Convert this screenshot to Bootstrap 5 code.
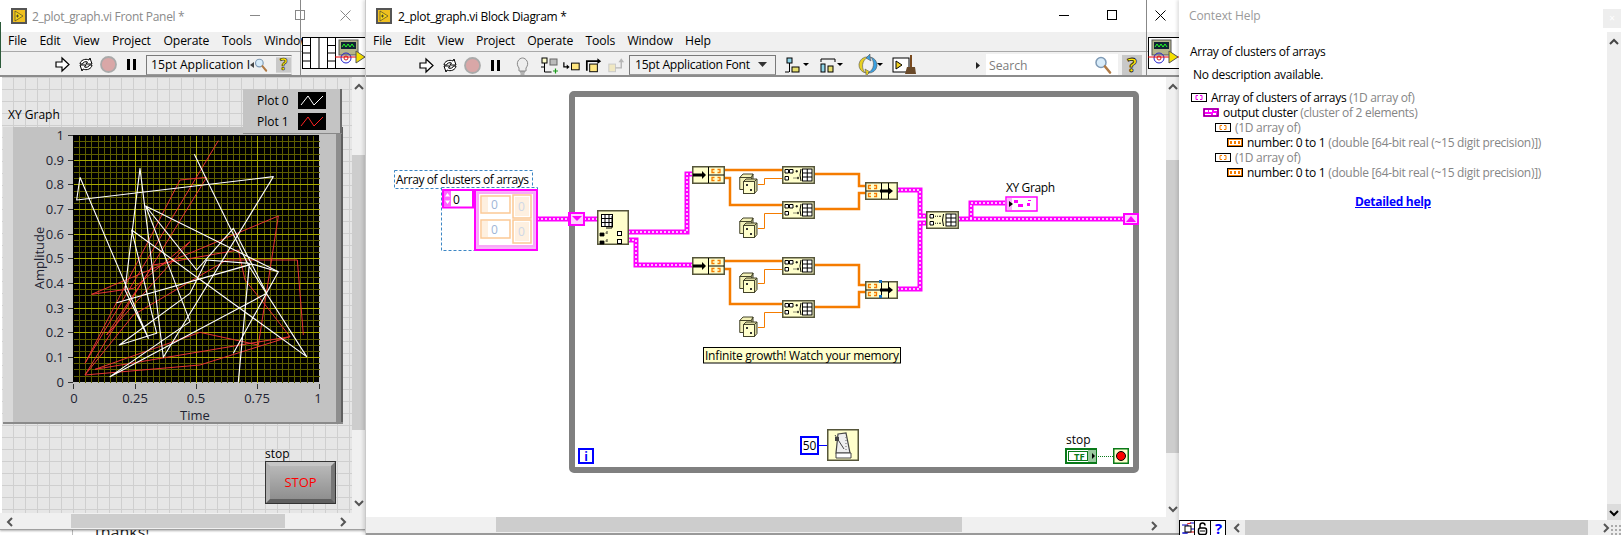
<!DOCTYPE html>
<html lang="en">
<head>
<meta charset="utf-8">
<title>2_plot_graph.vi</title>
<link href="https://cdn.jsdelivr.net/npm/bootstrap@5.3.0/dist/css/bootstrap.min.css" rel="stylesheet">
<style>
html,body{height:535px;overflow:hidden;background:#fff}
body{font-family:"Open Sans","Noto Sans",sans-serif;font-size:12px;letter-spacing:-.3px;color:#000;line-height:15px;position:relative}
.lv-win{position:absolute;top:0;background:#fff}
.win-fp{left:0;width:366px;height:530px;border-bottom:1px solid #a0a0a0;box-shadow:0 1px 2px rgba(0,0,0,.3)}
.win-bd{left:365px;width:815px;height:535px;border-left:1px solid #c9c9c9;box-shadow:-2px 0 3px rgba(0,0,0,.12)}
.win-help{left:1179px;width:442px;height:535px;box-shadow:-2px 0 3px rgba(0,0,0,.12)}
.behind-txt{position:absolute;left:95px;top:522px;font-size:16px;line-height:20px;color:#222;letter-spacing:0}
.behind-line{position:absolute;left:72px;top:530px;width:1px;height:5px;background:#bbb}
.edge-sliver{position:absolute;left:0;top:22px;width:1px;height:46px;background:#2c5a3a;z-index:5}
.tbar{height:32px;flex:none;font-size:12px}
.tbar-title{margin-left:5px}
.bd-tb .tbar-title{margin-left:6px}
.fp-title{color:#8a8a8a}
.vi-logo{width:16px;height:16px;flex:none}
.fp-tb{padding-left:11px}
.bd-tb{padding-left:10px}
.capbtns{position:absolute;top:9px;display:flex;gap:0}
.capbtn{width:45px;height:12px;display:flex;justify-content:center;align-items:center}
.capbtns-bd .capbtn{width:48px}
.menu-bar{height:20px;flex:none;background:#f0f0f0;border-bottom:1px solid #a9a9a9;font-size:12.2px;letter-spacing:-.12px;line-height:18px;overflow:hidden;white-space:nowrap}
.fp-menu{padding-left:8px;gap:12.6px}
.bd-menu{padding-left:7px;gap:12.3px}
.tool-bar{height:25px;flex:none;background:#f0f0f0;border-bottom:2px solid #8c8c8c;overflow:hidden;padding-top:3px}
.fp-tools{padding-top:2px}
.tic{width:23px;height:23px;flex:none;display:block}
.tic-s{width:22px}
.font-box{height:20px;border:1px solid #7a7a7a;border-right-color:#ddd;border-bottom-color:#9a9a9a;font-size:12.2px;letter-spacing:0;line-height:18px;white-space:nowrap;background:#f0f0f0;flex:none}
.font-fp{width:146px;margin-left:3px;padding-left:4px;position:relative}
.font-bd{width:147px;margin-left:2px;padding-left:5px;border-right-color:#7a7a7a;letter-spacing:-.3px}
.pane-pos{position:absolute;top:0;height:76px;border-left:1px solid #888;background:transparent}
.pane-box{position:absolute;top:37px;background:#fff;border:1px solid #000;border-radius:1px}
.canvas-fp{flex:1 1 auto;position:relative;background-color:#e6e6e6;background-image:linear-gradient(#cfcfcf 1px,transparent 1px),linear-gradient(90deg,#cfcfcf 1px,transparent 1px);background-size:12px 12px;background-position:11px 0;margin-left:2px;overflow:hidden}
.canvas-bd{flex:1 1 auto;position:relative;background:#fff;overflow:hidden}
.full-svg{position:absolute;left:0;top:0;display:block}
.vs{width:14px;flex:none;background:#f0f0f0;position:relative}
.vs-thumb{position:absolute;left:0;right:0;background:#cdcdcd}
.vs-up{position:absolute;left:2px;width:10px;height:7px}
.hs{height:16px;flex:none;background:#f0f0f0;position:relative}
.hs-thumb{position:absolute;top:1px;bottom:1px;background:#cdcdcd}
.hs-ch{position:absolute;top:4px;width:7px;height:10px}
.stop-lbl{position:absolute;left:263px;top:369px;font-size:12px;letter-spacing:0}
.stop-btn{position:absolute;left:263px;top:384px;width:71px;height:43px;border-radius:0;padding:0;color:#f00;font-size:13px;font-family:inherit;letter-spacing:0;line-height:31px;border-style:solid;border-width:5px;border-color:#c6c6c6 #777 #5f5f5f #b0b0b0;outline:1px solid #333;outline-offset:-1px;background:linear-gradient(#b8b8b8,#8f8f8f)}
.help-head{position:absolute;left:10px;top:8px;font-size:12px;color:#9a9a9a;letter-spacing:-.1px}
.help-x{position:absolute;right:0;top:9px;width:18px;height:19px;background:#eee;color:#fff;font-size:10px;text-align:center;line-height:18px}
.help-body{position:absolute;left:0;top:32px;right:14px;bottom:14px;overflow:hidden}
.help-name{position:absolute;left:11px;top:12px}
.help-desc{position:absolute;left:14px;top:35px}
.help-tree{position:absolute;left:12px;top:58px;white-space:nowrap}
.tree-row{height:15px;align-items:center;display:flex;gap:4px}
.lv1{padding-left:12px}.lv2{padding-left:24px}.lv3{padding-left:36px}
.muted-lv{color:#858585}
.type-ic{width:16px;height:9px;display:block;flex:none}
.help-link{position:absolute;left:176px;top:162px;font-weight:700;color:#00f}
.vs-help{position:absolute;right:0;top:32px;bottom:14px;width:14px;background:#eee}
.vs-help-low{position:absolute;left:0;right:0;bottom:0;height:17px;background:#dcdcdc}
.hs-help{position:absolute;left:0;right:0;bottom:0;height:15px;background:#eee}
.help-btns{display:flex;height:15px;width:49px}
.help-btn{width:16.33px;height:15px;border:1px solid #000;border-bottom:0;margin-right:-1px;background:#fff;display:block;flex:none}
.grip{position:absolute;right:0;bottom:0;width:11px;height:11px;background-image:radial-gradient(#aaa 1px,transparent 1.2px);background-size:4px 4px}
text{font-family:"Open Sans","Noto Sans",sans-serif;letter-spacing:0}
.t12{font-size:12px;fill:#000}
.t-axis{font-size:13px;fill:#1f2433}
</style>
</head>
<body>
<svg width="0" height="0" class="position-absolute">
<defs>
<symbol id="s-logo" viewBox="0 0 16 16"><rect width="16" height="16" fill="#555"/><rect x="2" y="2" width="12" height="12" fill="#f0c020"/><path d="M4 3l8 5-8 5z" fill="#f7d417" stroke="#333" stroke-width=".6"/><path d="M5 8h3M6.500 6.500v3" stroke="#333" stroke-width=".8"/></symbol>
<symbol id="s-run" viewBox="0 0 23 23"><path d="M5 9h6V5l7 6.500-7 6.500v-4H5z" fill="#fff" stroke="#000" stroke-width="1.200"/></symbol>
<symbol id="s-cont" viewBox="0 0 23 23"><path d="M6 11a6 5 0 0 1 9-4l1-2 2 6-6 0 1.500-2a3.500 3 0 0 0-5 2z" fill="#fff" stroke="#000"/><path d="M18 12a6 5 0 0 1-9 4l-1 2-2-6 6 0-1.500 2a3.500 3 0 0 0 5-2z" fill="#fff" stroke="#000"/></symbol>
<symbol id="s-abort" viewBox="0 0 23 23"><circle cx="11.500" cy="11.500" r="7.500" fill="#d9a7a7" stroke="#aaa" stroke-width="1.800"/></symbol>
<symbol id="s-pause" viewBox="0 0 23 23"><path d="M7 6h3v11H7zM13 6h3v11h-3z" fill="#000"/></symbol>
<symbol id="s-bulb" viewBox="0 0 23 23"><path d="M8 14c-4-5 0-10 3.500-10s7.500 5 3.500 10v3H8z" fill="#eee" stroke="#888"/><path d="M9 18h5M9.500 20h4" stroke="#777" stroke-width="1.200"/></symbol>
<symbol id="s-retain" viewBox="0 0 23 23"><rect x="4" y="4" width="5" height="5" fill="#ffc" stroke="#000"/><rect x="12" y="5" width="7" height="6" fill="#bbb" stroke="#666"/><path d="M6.500 9v9h7" fill="none" stroke="#000"/><path d="M15 17h5M17.500 14.500v5" stroke="#1a9a1a" stroke-width="1.200"/><path d="M3 13h4" stroke="#000"/></symbol>
<symbol id="s-into" viewBox="0 0 23 23"><path d="M3 8v5h4" fill="none" stroke="#000" stroke-width="1.300"/><path d="M6 10.500l3 2.500-3 2.500z" fill="#000"/><rect x="11" y="9" width="8" height="7" fill="#ffe680" stroke="#000"/></symbol>
<symbol id="s-over" viewBox="0 0 23 23"><path d="M4 17V7h12" fill="none" stroke="#000" stroke-width="1.800"/><path d="M15 4l4 3-4 3z" fill="#000"/><rect x="7" y="10" width="8" height="8" fill="#ffe680" stroke="#000"/></symbol>
<symbol id="s-out" viewBox="0 0 23 23" opacity=".55"><rect x="4" y="10" width="7" height="8" fill="#f0e2a0" stroke="#aaa"/><path d="M11 14h6V7" fill="none" stroke="#888" stroke-width="1.500"/><path d="M14 8l3-4 3 4z" fill="#888"/></symbol>
<symbol id="s-align" viewBox="0 0 26 23"><rect x="3" y="4" width="5" height="5" fill="#8fd4e8" stroke="#000"/><rect x="8" y="13" width="7" height="5" fill="#e8e070" stroke="#000"/><path d="M1 18h4M5.500 9v9" stroke="#000"/><path d="M19 9h6l-3 3z" fill="#000"/></symbol>
<symbol id="s-dist" viewBox="0 0 26 23"><path d="M3 5h14M3 5v3M17 5v3" fill="none" stroke="#000"/><rect x="3" y="10" width="4" height="8" fill="#8fd4e8" stroke="#000"/><rect x="10" y="12" width="5" height="6" fill="#e8e070" stroke="#000"/><path d="M19 9h6l-3 3z" fill="#000"/></symbol>
<symbol id="s-reorder" viewBox="0 0 30 23"><path d="M12 3a8 8 0 0 0-2 16l-1-4 5 3-4 4 0-2.500A10 10 0 0 1 12 3z" fill="#e8d020" stroke="#555" stroke-width=".6"/><path d="M12 19a8 8 0 0 0 2-16l1 4-5-3 4-4 0 2.500A10 10 0 0 1 12 19z" fill="#3aa0e0" stroke="#555" stroke-width=".6"/><path d="M21 9h6l-3 3z" fill="#000"/></symbol>
<symbol id="s-clean" viewBox="0 0 24 23"><rect x="1" y="4" width="16" height="14" fill="#fff" stroke="#000"/><path d="M4 7l6 4-6 4z" fill="#f0d020" stroke="#000"/><path d="M19 1v12" stroke="#7a4a1f" stroke-width="2"/><path d="M15 13h8l1 7H13z" fill="#6a4a2a"/></symbol>
<symbol id="s-zoom" viewBox="0 0 18 20"><circle cx="7" cy="7.500" r="5" fill="#d8ecfa" stroke="#7f9ab5" stroke-width="1.500"/><path d="M11 11.500l5 6" stroke="#b07a45" stroke-width="2.600" stroke-linecap="round"/></symbol>
<symbol id="s-help" viewBox="0 0 20 20"><rect width="20" height="20" fill="#c8c8c8"/><text x="10" y="17" text-anchor="middle" font-size="20" font-weight="700" fill="#ffe800" stroke="#222" stroke-width=".8">?</text></symbol>
<symbol id="s-up" viewBox="0 0 10 7"><path d="M1 6l4-4 4 4" fill="none" stroke="#555" stroke-width="2"/></symbol>
<symbol id="s-down" viewBox="0 0 10 7"><path d="M1 1l4 4 4-4" fill="none" stroke="#555" stroke-width="2"/></symbol>
<symbol id="s-left" viewBox="0 0 7 10"><path d="M6 1L2 5l4 4" fill="none" stroke="#555" stroke-width="2"/></symbol>
<symbol id="s-right" viewBox="0 0 7 10"><path d="M1 1l4 4-4 4" fill="none" stroke="#555" stroke-width="2"/></symbol>
<symbol id="s-conn" viewBox="0 0 34 32"><rect x=".5" y=".5" width="33" height="31" fill="#fff" stroke="#000"/><path d="M8.500 1v30M25.500 1v30M17 1v30M1 8.500h7.500M1 16h7.500M1 24h7.500M25.500 8.500H33M25.500 16H33M25.500 24H33" stroke="#000" fill="none"/></symbol>
<symbol id="s-viicon" viewBox="0 0 32 32"><rect x=".5" y=".5" width="31" height="31" fill="#fff" stroke="#000"/><rect x="4" y="3" width="19" height="15" fill="#b5b58a" stroke="#555"/><rect x="6" y="5" width="15" height="7" fill="#123"/><path d="M7 10l2-3 2 3 2-3 2 3 2-3 2 3" fill="none" stroke="#2f2" stroke-width="1"/><circle cx="11" cy="21" r="5" fill="none" stroke="#22c"/><circle cx="11" cy="21" r="2" fill="none" stroke="#c22"/><path d="M0 20h32" stroke="#e00"/><path d="M21 14l9 6-9 6z" fill="#f5e000" stroke="#555"/></symbol>
<symbol id="s-build" viewBox="0 0 33 18"><rect x=".75" y=".75" width="31.500" height="16.500" fill="#ffc" stroke="#55553a" stroke-width="1.500"/><path d="M3 3.500h3.500v3.500H3zM7.500 3.500H11v3.500H7.500zM3 10.500h3.500V14H3z" fill="#fff" stroke="#000"/><path d="M11.500 12h1M13.500 12h1M13.500 5.250h2.500M14.750 4v2.500M15 12h2M16 10.800v2.400" stroke="#000" stroke-width=".9"/><path d="M19 3q-2 6 0 12" fill="none" stroke="#000"/><rect x="20.500" y="3" width="9.500" height="12" fill="#fff" stroke="#000"/><path d="M25.250 3v12M20.500 7h9.500M20.500 11h9.500" stroke="#000"/></symbol>
<symbol id="s-build2" viewBox="0 0 33 18"><rect x=".75" y=".75" width="31.500" height="16.500" fill="#ffc" stroke="#55553a" stroke-width="1.500"/><path d="M4 3.500h3.500v3.500H4zM4 10.500h3.500V14H4z" fill="#fff" stroke="#000"/><path d="M9 5.250h1M11 5.250h1M13 5.250h2M9 12.250h1M11 12.250h1M13 12.250h2" stroke="#000" stroke-width=".9"/><path d="M17.500 3q-2 6 0 12" fill="none" stroke="#000"/><rect x="20" y="3" width="10" height="12" fill="#fff" stroke="#000"/><path d="M25 3v12M20 7h10M20 11h10" stroke="#000"/></symbol>
<symbol id="s-split" viewBox="0 0 33 18"><rect x=".75" y=".75" width="31.500" height="16.500" fill="#ffc" stroke="#55553a" stroke-width="1.500"/><path d="M16.500 1v16M16.500 9H32" stroke="#000"/><path d="M1 7.500h9V5l4 4-4 4v-2.500H1z" fill="#000"/><path d="M22.500 3.500h-2.500v3h2.500M25.500 3.500h2.500v3h-2.500M22.500 11.500h-2.500v3h2.500M25.500 11.500h2.500v3h-2.500" fill="none" stroke="#f57c00" stroke-width="1.300"/></symbol>
<symbol id="s-bundle" viewBox="0 0 33 18"><rect x=".75" y=".75" width="31.500" height="16.500" fill="#ffc" stroke="#55553a" stroke-width="1.500"/><path d="M16.500 1v16M23.500 1v16M1 9h15.500" stroke="#000"/><path d="M15 7.500h8V5l5 4-5 4v-2.500h-8z" fill="#000"/><path d="M6 3.500H3.500v3H6M9 3.500h2.500v3H9M6 11.500H3.500v3H6M9 11.500h2.500v3H9" fill="none" stroke="#f57c00" stroke-width="1.300"/></symbol>
<symbol id="s-dice" viewBox="0 0 19 21"><path d="M.75 4.500L4 1h10l-1.500 3.500zM.75 4.500h11.750v12H.75z" fill="#f3f1b8" stroke="#44442a"/><path d="M12.500 4.500L14 1v7" fill="#cccc99" stroke="#44442a"/><rect x="4.500" y="8.500" width="11" height="12" fill="#ffc" stroke="#44442a"/><path d="M4.500 8.500L7 6h11l-2.500 2.500zM15.500 8.500L18 6v11.500l-2.500 3z" fill="#d8d6a0" stroke="#44442a"/><rect x="7" y="11" width="2" height="2" fill="#333"/><rect x="11" y="16" width="2" height="2" fill="#333"/></symbol>
</defs>
</svg>

<div class="behind-line"></div>
<div class="behind-txt">thanks!</div>

<section class="lv-win win-fp d-flex flex-column">
  <div class="tbar d-flex align-items-center fp-tb"><svg class="vi-logo"><use href="#s-logo"/></svg><span class="tbar-title fp-title">2_plot_graph.vi Front Panel *</span></div>
  <div class="capbtns" style="left:233px">
    <span class="capbtn"><svg width="11" height="11"><path d="M0 5.500h10" stroke="#888"/></svg></span>
    <span class="capbtn"><svg width="11" height="11"><rect x=".5" y=".5" width="9" height="9" fill="none" stroke="#888"/></svg></span>
    <span class="capbtn"><svg width="11" height="11"><path d="M.5.500l10 10M10.500.500l-10 10" stroke="#888"/></svg></span>
  </div>
  <nav class="menu-bar d-flex fp-menu"><span>File</span><span>Edit</span><span>View</span><span>Project</span><span>Operate</span><span>Tools</span><span>Window</span></nav>
  <div class="tool-bar fp-tools d-flex align-items-center" style="padding-left:51px">
    <svg class="tic"><use href="#s-run"/></svg><svg class="tic"><use href="#s-cont"/></svg><svg class="tic"><use href="#s-abort"/></svg><svg class="tic"><use href="#s-pause"/></svg>
    <div class="font-box font-fp d-flex align-items-center">15pt Application I<svg width="5" height="6" class="ms-auto me-0"><path d="M4 0v6L0 3z" fill="#444"/></svg><svg width="18" height="20"><use href="#s-zoom"/></svg><svg width="20" height="20" class="ms-2"><use href="#s-help"/></svg></div>
  </div>
  <div class="d-flex flex-grow-1" style="min-height:0">
    <div class="canvas-fp">
      <svg class="full-svg" width="350" height="435" viewBox="2 77 350 435">
        <rect x="3" y="127" width="340" height="297" fill="#c2c2c2"/>
        <rect x="3" y="127" width="10" height="297" fill="#d9d9d9"/>
        <rect x="336" y="127" width="7" height="297" fill="#8d8d8d"/>
        <rect x="341" y="127" width="2" height="297" fill="#5f5f5f"/>
        <rect x="3" y="422" width="340" height="2" fill="#8a8a8a"/>
        <text x="8" y="119" class="t12">XY Graph</text>
        <rect x="243" y="89" width="98" height="45" fill="#c4c4c4"/><rect x="340" y="89" width="2" height="45" fill="#6a6a6a"/><rect x="243" y="133" width="99" height="1" fill="#888"/>
        <text x="257" y="105" class="t12">Plot 0</text><text x="257" y="126" class="t12">Plot 1</text>
        <rect x="298" y="92" width="28" height="17" fill="#000"/><rect x="298" y="113" width="28" height="17" fill="#000"/>
        <path d="M301 105l7-9 6 9 9-9" fill="none" stroke="#fff"/><path d="M301 126l7-9 6 9 9-9" fill="none" stroke="#f22"/>
        <rect x="73" y="135" width="246" height="247" fill="#000"/>
        <g transform="translate(.5 .5)" shape-rendering="crispEdges">
          <path stroke="#5e5e00" fill="none" d="M79 135v247M85 135v247M91 135v247M98 135v247M104 135v247M110 135v247M116 135v247M122 135v247M128 135v247M141 135v247M147 135v247M153 135v247M159 135v247M165 135v247M171 135v247M178 135v247M184 135v247M190 135v247M202 135v247M208 135v247M214 135v247M221 135v247M227 135v247M233 135v247M239 135v247M245 135v247M251 135v247M264 135v247M270 135v247M276 135v247M282 135v247M288 135v247M294 135v247M300 135v247M307 135v247M313 135v247M73 141h246M73 147h246M73 154h246M73 166h246M73 172h246M73 178h246M73 191h246M73 197h246M73 203h246M73 215h246M73 221h246M73 228h246M73 240h246M73 246h246M73 252h246M73 265h246M73 271h246M73 277h246M73 289h246M73 295h246M73 302h246M73 314h246M73 320h246M73 326h246M73 339h246M73 345h246M73 351h246M73 363h246M73 369h246M73 376h246"/>
          <path stroke="#a8a800" fill="none" d="M135 135v247M196 135v247M257 135v247M73 160h246M73 184h246M73 209h246M73 234h246M73 258h246M73 283h246M73 308h246M73 332h246M73 357h246"/>
          <path stroke="#333" fill="none" d="M67 135h5M67 160h5M67 184h5M67 209h5M67 234h5M67 258h5M67 283h5M67 308h5M67 332h5M67 357h5M67 382h5M73 383v5M135 383v5M196 383v5M257 383v5M319 383v5"/>
        </g>
        <g class="t-axis" text-anchor="end">
          <text x="64" y="140" class="t-axis">1</text><text x="64" y="165" class="t-axis">0.9</text><text x="64" y="189" class="t-axis">0.8</text><text x="64" y="214" class="t-axis">0.7</text><text x="64" y="239" class="t-axis">0.6</text><text x="64" y="263" class="t-axis">0.5</text><text x="64" y="288" class="t-axis">0.4</text><text x="64" y="313" class="t-axis">0.3</text><text x="64" y="337" class="t-axis">0.2</text><text x="64" y="362" class="t-axis">0.1</text><text x="64" y="387" class="t-axis">0</text>
        </g>
        <g text-anchor="middle">
          <text x="74" y="403" class="t-axis">0</text><text x="135" y="403" class="t-axis">0.25</text><text x="196" y="403" class="t-axis">0.5</text><text x="257" y="403" class="t-axis">0.75</text><text x="318" y="403" class="t-axis">1</text>
          <text x="195" y="420" class="t-axis">Time</text>
          <text transform="translate(44 258) rotate(-90)" class="t-axis">Amplitude</text>
        </g>
        <g transform="translate(0 120) scale(.33333)" fill="none" stroke-linejoin="round">
          <g stroke="#e83434" stroke-width="3">
            <polyline points="655,62 255,730 540,180 620,172 255,765 600,735 870,650 285,748 600,637 775,675 835,288 275,523 400,505 570,365 320,645 460,435 715,390 735,480 800,560 870,650"/>
            <polyline points="910,645 892,420 680,420 400,585 255,765"/>
          </g>
          <g stroke="#fff" stroke-width="3.300">
            <polyline points="240,172 230,240 820,170 490,712 420,145 375,510 445,655 240,172"/>
            <polyline points="583,103 745,435 920,710 395,330 470,640 358,675 570,520 620,420 748,430 715,785 748,435 350,548 755,432 835,455 700,700"/>
            <polyline points="437,258 570,605 330,770 800,520 700,325 590,450 437,258 835,455"/>
          </g>
        </g>
      </svg>
      <span class="stop-lbl">stop</span>
      <button type="button" class="btn stop-btn">STOP</button>
    </div>
    <div class="vs"><div class="vs-thumb" style="top:78px;height:275px"></div><svg class="vs-up" style="top:6px"><use href="#s-up"/></svg><svg class="vs-up" style="top:423px"><use href="#s-down"/></svg></div>
  </div>
  <div class="hs"><div class="hs-thumb" style="left:71px;width:214px"></div><svg class="hs-ch" style="left:6px"><use href="#s-left"/></svg><svg class="hs-ch" style="left:340px"><use href="#s-right"/></svg></div>
  <div class="pane-pos" style="left:300px"></div>
  <div class="pane-box p-0" style="left:302px;width:34px;height:32px;border:0"><svg width="34" height="32" class="d-block"><use href="#s-conn"/></svg></div>
  <div class="pane-box p-0" style="left:335px;width:31px;height:32px;border:0"><svg width="32" height="32" class="d-block"><use href="#s-viicon"/></svg></div>
</section>
<div class="edge-sliver"></div>

<section class="lv-win win-bd d-flex flex-column">
  <div class="tbar d-flex align-items-center bd-tb"><svg class="vi-logo"><use href="#s-logo"/></svg><span class="tbar-title">2_plot_graph.vi Block Diagram *</span></div>
  <div class="capbtns capbtns-bd" style="left:674px">
    <span class="capbtn"><svg width="11" height="11"><path d="M0 5.500h10" stroke="#000"/></svg></span>
    <span class="capbtn"><svg width="11" height="11"><rect x=".5" y=".5" width="9" height="9" fill="none" stroke="#000"/></svg></span>
    <span class="capbtn"><svg width="11" height="11"><path d="M.5.500l10 10M10.500.500l-10 10" stroke="#000"/></svg></span>
  </div>
  <nav class="menu-bar d-flex bd-menu"><span>File</span><span>Edit</span><span>View</span><span>Project</span><span>Operate</span><span>Tools</span><span>Window</span><span>Help</span></nav>
  <div class="tool-bar d-flex align-items-center" style="padding-left:49px">
    <svg class="tic"><use href="#s-run"/></svg><svg class="tic"><use href="#s-cont"/></svg><svg class="tic"><use href="#s-abort"/></svg><svg class="tic"><use href="#s-pause"/></svg>
    <svg class="tic ms-1"><use href="#s-bulb"/></svg><svg class="tic ms-1"><use href="#s-retain"/></svg><svg class="tic tic-s"><use href="#s-into"/></svg><svg class="tic tic-s"><use href="#s-over"/></svg><svg class="tic tic-s"><use href="#s-out"/></svg>
    <div class="font-box font-bd d-flex align-items-center">15pt Application Font<svg width="9" height="6" class="ms-auto me-2"><path d="M0 0h9L4.500 5z" fill="#333"/></svg></div>
    <svg width="26" height="23" class="ms-2"><use href="#s-align"/></svg><svg width="26" height="23" class="ms-2"><use href="#s-dist"/></svg><svg width="30" height="23" style="margin-left:12px"><use href="#s-reorder"/></svg><svg width="24" height="23" style="margin-left:6px"><use href="#s-clean"/></svg>
    <svg width="5" height="7" style="margin-left:60px"><path d="M0 0v7l4-3.500z" fill="#222"/></svg>
    <div class="d-flex align-items-center" style="margin-left:5px;width:132px;height:23px;background:#fff;padding-left:3px;color:#7d7d7d;font-size:12.2px;letter-spacing:0">Search<svg width="18" height="20" class="ms-auto" style="margin-right:6px"><use href="#s-zoom"/></svg></div>
    <svg width="20" height="20" class="ms-1"><use href="#s-help"/></svg>
  </div>
  <div class="d-flex flex-grow-1" style="min-height:0">
    <div class="canvas-bd">
      <svg class="full-svg" width="798" height="440" viewBox="366 77 798 440">
        <defs>
          <g id="pink-wires" fill="none">
            <path d="M537 219H569M584 219H597"/>
            <path d="M628 232H687V174H692"/>
            <path d="M628 240H636V265H692"/>
            <path d="M897 190H920V216H926"/>
            <path d="M897 289H920V223H926"/>
            <path d="M958 219H1124"/>
            <path d="M971 219V203H1005"/>
          </g>
        </defs>
        <rect x="572" y="94" width="564" height="376" rx="2" fill="none" stroke="#808080" stroke-width="6"/>
        <use href="#pink-wires" stroke="#f0f" stroke-width="5"/>
        <use href="#pink-wires" stroke="#fff" stroke-width="1.500" stroke-dasharray="2 2"/>
        <g fill="none" stroke="#f57c00" stroke-width="2.500">
          <path d="M724 170H782"/><path d="M724 178H730V205H782"/><path d="M814 174H859V186H865"/><path d="M814 209H859V193H865"/>
          <path d="M724 261H782"/><path d="M724 269H730V304H782"/><path d="M814 265H859V285H865"/><path d="M814 307H859V292H865"/>
        </g>
        <g fill="none" stroke="#f57c00" stroke-width="1">
          <path d="M758 184.500H764.500V178.500H782"/><path d="M758 228.500H764.500V213.500H782"/><path d="M758 283.500H764.500V269.500H782"/><path d="M758 327.500H764.500V312.500H782"/>
        </g>
        <rect x="394.500" y="170.500" width="138" height="18" fill="#fff" stroke="#3c86c4" stroke-dasharray="3 2"/>
        <text x="396" y="184" class="t12" textLength="133">Array of clusters of arrays</text>
        <rect x="441.500" y="187.500" width="96" height="63" fill="#fff" stroke="#3c86c4" stroke-dasharray="3 2"/>
        <rect x="443" y="190" width="30" height="17.500" fill="#fff" stroke="#f0f" stroke-width="2"/>
        <rect x="444" y="191" width="7" height="16" fill="#f6f"/><path d="M447.500 193l-2.500 3.500h5zM447.500 204l-2.500-3.500h5z" fill="#fff"/>
        <text x="453" y="204" class="t12">0</text>
        <rect x="475" y="190" width="62" height="60" fill="#f7b9f7" stroke="#f0f" stroke-width="2"/>
        <rect x="478" y="193" width="56" height="53" fill="#fff" stroke="#f9a8f9" stroke-width="2"/>
        <g fill="#fff" stroke="#fbc995" stroke-width="1.500">
          <rect x="481" y="196" width="29" height="17"/><rect x="513" y="195" width="18" height="23"/><rect x="481" y="220" width="29" height="18"/><rect x="513" y="220" width="18" height="23"/>
        </g>
        <path d="M482 197h6v15h-6zM482 221h6v16h-6zM515 197h14v19h-14zM515 222h14v19h-14z" fill="#fef0e0"/>
        <text x="491" y="209" font-size="12" fill="#9fb6d6">0</text><text x="491" y="234" font-size="12" fill="#9fb6d6">0</text><text x="518" y="211" font-size="12" fill="#cfd8e6">0</text><text x="518" y="236" font-size="12" fill="#cfd8e6">0</text>
        <rect x="570" y="214" width="14" height="10" fill="#fff" stroke="#f0f" stroke-width="2"/><path d="M571 214h12v10h-12z" fill="#ffd0ff"/><path d="M572 216h10l-5 5z" fill="#f0f"/><rect x="569" y="213" width="15" height="12" fill="none" stroke="#f0f" stroke-width="2"/>
        <rect x="597.750" y="210.750" width="30.500" height="33.500" fill="#ffc" stroke="#55553a" stroke-width="1.500"/>
        <rect x="601.500" y="214.500" width="11" height="12" fill="#fff" stroke="#000"/><path d="M605 214.500v12M609 214.500v12M601.500 218.500h11M601.500 222.500h11M612 216v12H606" fill="none" stroke="#000"/>
        <path d="M600 233h4v3h-4zM600 241h4v3h-4zM605.500 233h1M607 231v3M605.500 241h1M607 239v3" fill="#000" stroke="#000" stroke-width=".8"/>
        <rect x="617.500" y="231.500" width="4" height="4" fill="#fff" stroke="#000"/><rect x="617.500" y="239.500" width="4" height="4" fill="#fff" stroke="#000"/>
        <use href="#s-split" x="692" y="166" width="33" height="18"/><use href="#s-split" x="692" y="257" width="33" height="18"/>
        <use href="#s-build" x="782" y="166" width="33" height="18"/><use href="#s-build" x="782" y="201" width="33" height="18"/><use href="#s-build" x="782" y="257" width="33" height="18"/><use href="#s-build" x="782" y="300" width="33" height="18"/>
        <use href="#s-dice" x="739" y="173" width="19" height="21"/><use href="#s-dice" x="739" y="217" width="19" height="21"/><use href="#s-dice" x="739" y="272" width="19" height="21"/><use href="#s-dice" x="739" y="316" width="19" height="21"/>
        <use href="#s-bundle" x="865" y="182" width="33" height="18"/><use href="#s-bundle" x="865" y="281" width="33" height="18"/>
        <rect x="879" y="280" width="3" height="3" fill="#1270c0"/><rect x="879" y="295" width="3" height="3" fill="#1270c0"/>
        <use href="#s-build2" x="926" y="211" width="33" height="18"/>
        <rect x="703.500" y="347.500" width="197" height="15.500" fill="#ffc" stroke="#000"/>
        <text x="705" y="360" class="t12" textLength="194">Infinite growth! Watch your memory</text>
        <text x="1006" y="192" class="t12" textLength="49">XY Graph</text>
        <rect x="1006" y="197" width="31" height="14" fill="#fff" stroke="#f0f" stroke-width="1.500"/><path d="M1007 198h5v12h-5z" fill="#f9b4f9"/><path d="M1009 201l4 3-4 3z" fill="#000"/><path d="M1014 200h4v3h-4zM1018 204h5v3h-5zM1028 200h3v1h-3zM1027 203h3v3h-3z" fill="#f0f"/>
        <rect x="1124" y="214" width="14" height="10" fill="#ffd0ff" stroke="#f0f" stroke-width="2"/><path d="M1126 222h10l-5-6z" fill="#f0f"/>
        <rect x="579" y="449" width="14" height="14" fill="#fff" stroke="#00f" stroke-width="2"/><text x="586" y="460.500" font-size="12" font-weight="700" fill="#00f" text-anchor="middle">i</text>
        <rect x="801" y="437" width="17" height="17" fill="#fff" stroke="#00f" stroke-width="2"/><text x="809.500" y="450" class="t12" text-anchor="middle">50</text>
        <path d="M819 445.500H827" stroke="#00f"/>
        <rect x="827.750" y="429.750" width="30.500" height="30.500" fill="#ffc" stroke="#55553a" stroke-width="1.500"/>
        <path d="M838 434l8-1 4 20h-14z" fill="#eee" stroke="#444" stroke-width="1.200"/><path d="M835 435l9 14" stroke="#444"/><rect x="835" y="437" width="4" height="4" fill="#444"/><path d="M836 453h15v5h-15z" fill="#fff" stroke="#444"/><path d="M846 437v13" stroke="#666" stroke-dasharray="1 2"/>
        <text x="1066" y="444" class="t12">stop</text>
        <rect x="1066" y="449" width="30" height="14" fill="#fff" stroke="#0a7a1a" stroke-width="2"/><rect x="1068.500" y="451.500" width="19" height="9" fill="#fff" stroke="#0a7a1a"/><rect x="1088" y="450" width="8" height="12" fill="#9ac89f"/>
        <text x="1074" y="460" font-size="9.500" font-weight="700" fill="#0a7a1a" letter-spacing="2">TF</text>
        <path d="M1092 453l3 3-3 3z" fill="#000"/>
        <path d="M1098 456.500H1113" stroke="#0a7a1a" stroke-dasharray="1 1"/>
        <rect x="1113.750" y="448.750" width="14.500" height="14.500" fill="#ffc" stroke="#0a7a1a" stroke-width="1.500"/><circle cx="1121" cy="456" r="4.500" fill="#f00" stroke="#000"/>
      </svg>
    </div>
    <div class="vs"><div class="vs-thumb" style="top:83px;height:293px"></div><svg class="vs-up" style="top:6px"><use href="#s-up"/></svg><svg class="vs-up" style="top:429px"><use href="#s-down"/></svg></div>
  </div>
  <div class="hs" style="border-bottom:2px solid #999;height:18px"><div class="hs-thumb" style="left:130px;width:466px;bottom:1px;top:0"></div><svg class="hs-ch" style="left:785px"><use href="#s-right"/></svg></div>
  <div class="pane-pos" style="left:780px"></div>
  <div class="pane-box p-0" style="left:782px;width:32px;height:32px;border:0"><svg width="32" height="32" class="d-block"><use href="#s-viicon"/></svg></div>
</section>

<section class="lv-win win-help">
  <div class="help-head">Context Help</div>
  <div class="help-x">×</div>
  <div class="help-body">
    <div class="help-name">Array of clusters of arrays</div>
    <div class="help-desc">No description available.</div>
    <div class="help-tree">
      <div class="tree-row"><svg class="type-ic"><rect x=".5" y=".5" width="15" height="8" fill="#fff" stroke="#000"/><path d="M7 2.500H5v4h2M9 2.500h2v4H9" fill="none" stroke="#e0e"/></svg><span>Array of clusters of arrays <span class="muted-lv">(1D array of)</span></span></div>
      <div class="tree-row lv1"><svg class="type-ic"><rect width="16" height="9" fill="#f0f"/><rect x="1" y="1" width="14" height="7" fill="#f0f" stroke="#000" stroke-width=".6"/><path d="M2 2h3v2H2zM6 2h3v2H6zM10 5h3v2h-3zM11 2h3v1h-3zM2 6h6v1H2z" fill="#fff"/></svg><span>output cluster <span class="muted-lv">(cluster of 2 elements)</span></span></div>
      <div class="tree-row lv2"><svg class="type-ic"><rect x=".5" y=".5" width="15" height="8" fill="#fff" stroke="#000"/><path d="M7 2.500H5v4h2M9 2.500h2v4H9" fill="none" stroke="#f57c00"/></svg><span class="muted-lv">(1D array of)</span></div>
      <div class="tree-row lv3"><svg class="type-ic"><rect x=".5" y=".5" width="15" height="8" fill="#f57c00" stroke="#000"/><rect x="2" y="2" width="12" height="5" fill="#fff"/><path d="M3 3h2v3H3zM7 3h2v3H7zM11 3h2v3h-2z" fill="#f57c00"/></svg><span>number: 0 to 1 <span class="muted-lv">(double [64-bit real (~15 digit precision)])</span></span></div>
      <div class="tree-row lv2"><svg class="type-ic"><rect x=".5" y=".5" width="15" height="8" fill="#fff" stroke="#000"/><path d="M7 2.500H5v4h2M9 2.500h2v4H9" fill="none" stroke="#f57c00"/></svg><span class="muted-lv">(1D array of)</span></div>
      <div class="tree-row lv3"><svg class="type-ic"><rect x=".5" y=".5" width="15" height="8" fill="#f57c00" stroke="#000"/><rect x="2" y="2" width="12" height="5" fill="#fff"/><path d="M3 3h2v3H3zM7 3h2v3H7zM11 3h2v3h-2z" fill="#f57c00"/></svg><span>number: 0 to 1 <span class="muted-lv">(double [64-bit real (~15 digit precision)])</span></span></div>
    </div>
    <a class="help-link" href="#">Detailed help</a>
  </div>
  <div class="vs-help"><svg class="vs-up" style="top:6px"><path d="M1 6l4-4 4 4" fill="none" stroke="#444" stroke-width="2"/></svg><div class="vs-help-low"><svg class="vs-up" style="top:6px"><path d="M1 1l4 4 4-4" fill="none" stroke="#000" stroke-width="2"/></svg></div></div>
  <div class="hs-help">
    <div class="hs-thumb" style="left:66px;right:33px;top:0;bottom:0"></div>
    <svg class="hs-ch" style="left:54px;top:3px"><use href="#s-left"/></svg><svg class="hs-ch" style="left:424px;top:3px"><use href="#s-right"/></svg>
    <div class="help-btns">
      <svg class="help-btn"><path d="M2 4h6v8H3M10 2h5M8 8h7M2 12h5" stroke="#00c" fill="none"/><path d="M7 3l4-1M8 11h6" stroke="#d00" fill="none"/><rect x="5" y="5" width="6" height="6" fill="#fff" stroke="#000"/></svg>
      <svg class="help-btn"><path d="M5 7V4.500a2.500 2.500 0 0 1 5 0" fill="none" stroke="#000" stroke-width="1.500"/><rect x="3.500" y="7" width="8" height="6.500" rx="2" fill="#fff" stroke="#000" stroke-width="1.500"/><path d="M5 10h5" stroke="#000"/></svg>
      <svg class="help-btn"><text x="7.500" y="13" text-anchor="middle" font-size="15" font-weight="700" fill="#00f">?</text></svg>
    </div>
    <div class="grip"></div>
  </div>
</section>
</body>
</html>
